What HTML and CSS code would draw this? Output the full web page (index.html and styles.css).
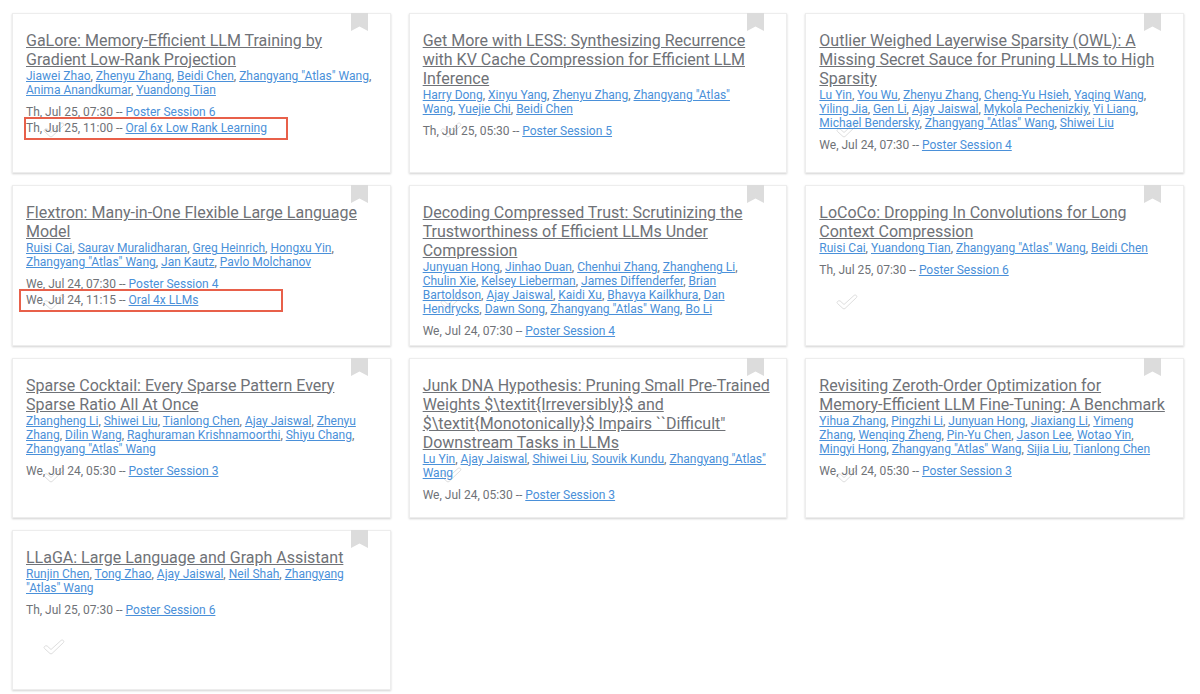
FILE: index.html
```html
<!DOCTYPE html>
<html lang="en">
<head>
<meta charset="utf-8">
<title>Papers</title>
<link rel="stylesheet" href="styles.css">
</head>
<body>
<svg class="defs" aria-hidden="true">
  <symbol id="bookmark" viewBox="0 0 17 18"><path d="M0 0H17V18L8.500 13.500L0 18Z" fill="#dcdcdc"/></symbol>
  <symbol id="check" viewBox="0 0 22 16"><path d="M1.500 7.500Q.5 8.500 1.500 9.500L7 14.500Q8 15.300 9 14.500L20.500 3.500Q21.300 2.500 20.300 1.500Q19.200.5 18.200 1.300L8 10.500L4.200 7Q2.800 6.200 1.500 7.500Z" fill="#fff" stroke="#dedede" stroke-linejoin="round"/></symbol>
</svg>
<main class="grid">
  <article class="card">
    <svg class="check" aria-hidden="true"><use href="#check"/></svg>
    <button class="bookmark" type="button" aria-label="Bookmark"><svg aria-hidden="true"><use href="#bookmark"/></svg></button>
    <h2 class="title"><a href="#">GaLore: Memory-Efficient LLM Training by Gradient Low-Rank Projection</a></h2>
    <p class="authors"><a href="#">Jiawei Zhao</a>, <a href="#">Zhenyu Zhang</a>, <a href="#">Beidi Chen</a>, <a href="#">Zhangyang "Atlas" Wang</a>, <a href="#">Anima Anandkumar</a>, <a href="#">Yuandong Tian</a></p>
    <ul class="sessions">
      <li>Th, Jul 25, 07:30 -- <a href="#">Poster Session 6</a></li>
      <li>Th, Jul 25, 11:00 -- <a href="#">Oral 6x Low Rank Learning</a></li>
    </ul>
    <span class="mark mark-galore"></span>
  </article>
  <article class="card">
    <svg class="check" aria-hidden="true"><use href="#check"/></svg>
    <button class="bookmark" type="button" aria-label="Bookmark"><svg aria-hidden="true"><use href="#bookmark"/></svg></button>
    <h2 class="title"><a href="#">Get More with LESS: Synthesizing Recurrence with KV Cache Compression for Efficient LLM Inference</a></h2>
    <p class="authors"><a href="#">Harry Dong</a>, <a href="#">Xinyu Yang</a>, <a href="#">Zhenyu Zhang</a>, <a href="#">Zhangyang "Atlas"<br>Wang</a>, <a href="#">Yuejie Chi</a>, <a href="#">Beidi Chen</a></p>
    <ul class="sessions">
      <li>Th, Jul 25, 05:30 -- <a href="#">Poster Session 5</a></li>
    </ul>
  </article>
  <article class="card">
    <svg class="check" aria-hidden="true"><use href="#check"/></svg>
    <button class="bookmark" type="button" aria-label="Bookmark"><svg aria-hidden="true"><use href="#bookmark"/></svg></button>
    <h2 class="title"><a href="#">Outlier Weighed Layerwise Sparsity (OWL): A Missing Secret Sauce for Pruning LLMs to High Sparsity</a></h2>
    <p class="authors"><a href="#">Lu Yin</a>, <a href="#">You Wu</a>, <a href="#">Zhenyu Zhang</a>, <a href="#">Cheng-Yu Hsieh</a>, <a href="#">Yaqing Wang</a>, <a href="#">Yiling Jia</a>, <a href="#">Gen Li</a>, <a href="#">Ajay Jaiswal</a>, <a href="#">Mykola Pechenizkiy</a>, <a href="#">Yi Liang</a>, <a href="#">Michael Bendersky</a>, <a href="#">Zhangyang "Atlas" Wang</a>, <a href="#">Shiwei Liu</a></p>
    <ul class="sessions">
      <li>We, Jul 24, 07:30 -- <a href="#">Poster Session 4</a></li>
    </ul>
  </article>
  <article class="card">
    <svg class="check" aria-hidden="true"><use href="#check"/></svg>
    <button class="bookmark" type="button" aria-label="Bookmark"><svg aria-hidden="true"><use href="#bookmark"/></svg></button>
    <h2 class="title"><a href="#">Flextron: Many-in-One Flexible Large Language Model</a></h2>
    <p class="authors"><a href="#">Ruisi Cai</a>, <a href="#">Saurav Muralidharan</a>, <a href="#">Greg Heinrich</a>, <a href="#">Hongxu Yin</a>, <a href="#">Zhangyang "Atlas" Wang</a>, <a href="#">Jan Kautz</a>, <a href="#">Pavlo Molchanov</a></p>
    <ul class="sessions">
      <li>We, Jul 24, 07:30 -- <a href="#">Poster Session 4</a></li>
      <li>We, Jul 24, 11:15 -- <a href="#">Oral 4x LLMs</a></li>
    </ul>
    <span class="mark mark-flextron"></span>
  </article>
  <article class="card">
    <svg class="check" aria-hidden="true"><use href="#check"/></svg>
    <button class="bookmark" type="button" aria-label="Bookmark"><svg aria-hidden="true"><use href="#bookmark"/></svg></button>
    <h2 class="title"><a href="#">Decoding Compressed Trust: Scrutinizing the Trustworthiness of Efficient LLMs Under Compression</a></h2>
    <p class="authors"><a href="#">Junyuan Hong</a>, <a href="#">Jinhao Duan</a>, <a href="#">Chenhui Zhang</a>, <a href="#">Zhangheng Li</a>, <a href="#">Chulin Xie</a>, <a href="#">Kelsey Lieberman</a>, <a href="#">James Diffenderfer</a>, <a href="#">Brian Bartoldson</a>, <a href="#">Ajay Jaiswal</a>, <a href="#">Kaidi Xu</a>, <a href="#">Bhavya Kailkhura</a>, <a href="#">Dan Hendrycks</a>, <a href="#">Dawn Song</a>, <a href="#">Zhangyang "Atlas" Wang</a>, <a href="#">Bo Li</a></p>
    <ul class="sessions">
      <li>We, Jul 24, 07:30 -- <a href="#">Poster Session 4</a></li>
    </ul>
  </article>
  <article class="card">
    <svg class="check" aria-hidden="true"><use href="#check"/></svg>
    <button class="bookmark" type="button" aria-label="Bookmark"><svg aria-hidden="true"><use href="#bookmark"/></svg></button>
    <h2 class="title"><a href="#">LoCoCo: Dropping In Convolutions for Long Context Compression</a></h2>
    <p class="authors"><a href="#">Ruisi Cai</a>, <a href="#">Yuandong Tian</a>, <a href="#">Zhangyang "Atlas" Wang</a>, <a href="#">Beidi Chen</a></p>
    <ul class="sessions">
      <li>Th, Jul 25, 07:30 -- <a href="#">Poster Session 6</a></li>
    </ul>
  </article>
  <article class="card">
    <svg class="check" aria-hidden="true"><use href="#check"/></svg>
    <button class="bookmark" type="button" aria-label="Bookmark"><svg aria-hidden="true"><use href="#bookmark"/></svg></button>
    <h2 class="title"><a href="#">Sparse Cocktail: Every Sparse Pattern Every Sparse Ratio All At Once</a></h2>
    <p class="authors"><a href="#">Zhangheng Li</a>, <a href="#">Shiwei Liu</a>, <a href="#">Tianlong Chen</a>, <a href="#">Ajay Jaiswal</a>, <a href="#">Zhenyu Zhang</a>, <a href="#">Dilin Wang</a>, <a href="#">Raghuraman Krishnamoorthi</a>, <a href="#">Shiyu Chang</a>, <a href="#">Zhangyang "Atlas" Wang</a></p>
    <ul class="sessions">
      <li>We, Jul 24, 05:30 -- <a href="#">Poster Session 3</a></li>
    </ul>
  </article>
  <article class="card">
    <svg class="check" aria-hidden="true"><use href="#check"/></svg>
    <button class="bookmark" type="button" aria-label="Bookmark"><svg aria-hidden="true"><use href="#bookmark"/></svg></button>
    <h2 class="title"><a href="#">Junk DNA Hypothesis: Pruning Small Pre-Trained Weights $\textit{Irreversibly}$ and $\textit{Monotonically}$ Impairs ``Difficult" Downstream Tasks in LLMs</a></h2>
    <p class="authors"><a href="#">Lu Yin</a>, <a href="#">Ajay Jaiswal</a>, <a href="#">Shiwei Liu</a>, <a href="#">Souvik Kundu</a>, <a href="#">Zhangyang "Atlas" Wang</a></p>
    <ul class="sessions">
      <li>We, Jul 24, 05:30 -- <a href="#">Poster Session 3</a></li>
    </ul>
  </article>
  <article class="card">
    <svg class="check" aria-hidden="true"><use href="#check"/></svg>
    <button class="bookmark" type="button" aria-label="Bookmark"><svg aria-hidden="true"><use href="#bookmark"/></svg></button>
    <h2 class="title"><a href="#">Revisiting Zeroth-Order Optimization for <span class="nowrap">Memory-Efficient</span> LLM Fine-Tuning: A Benchmark</a></h2>
    <p class="authors"><a href="#">Yihua Zhang</a>, <a href="#">Pingzhi Li</a>, <a href="#">Junyuan Hong</a>, <a href="#">Jiaxiang Li</a>, <a href="#">Yimeng Zhang</a>, <a href="#">Wenqing Zheng</a>, <a href="#">Pin-Yu Chen</a>, <a href="#">Jason Lee</a>, <a href="#">Wotao Yin</a>, <a href="#">Mingyi Hong</a>, <a href="#">Zhangyang "Atlas" Wang</a>, <a href="#">Sijia Liu</a>, <a href="#">Tianlong Chen</a></p>
    <ul class="sessions">
      <li>We, Jul 24, 05:30 -- <a href="#">Poster Session 3</a></li>
    </ul>
  </article>
  <article class="card">
    <svg class="check" aria-hidden="true"><use href="#check"/></svg>
    <button class="bookmark" type="button" aria-label="Bookmark"><svg aria-hidden="true"><use href="#bookmark"/></svg></button>
    <h2 class="title"><a href="#">LLaGA: Large Language and Graph Assistant</a></h2>
    <p class="authors"><a href="#">Runjin Chen</a>, <a href="#">Tong Zhao</a>, <a href="#">Ajay Jaiswal</a>, <a href="#">Neil Shah</a>, <a href="#">Zhangyang "Atlas" Wang</a></p>
    <ul class="sessions">
      <li>Th, Jul 25, 07:30 -- <a href="#">Poster Session 6</a></li>
    </ul>
  </article>
</main>
</body>
</html>
```
FILE: styles.css
```css
* { box-sizing: border-box; }

body {
  margin: 0;
  background: #fff;
  color: #6f7277;
  font-family: Roboto, sans-serif;
}

.defs { position: absolute; width: 0; height: 0; }

.grid {
  display: grid;
  grid-template-columns: repeat(3, minmax(0, 1fr));
  grid-auto-rows: 1fr;
  gap: 12px 18px;
  min-height: 100vh;
  padding: 13px 16px 4px 12px;
}

.card {
  position: relative;
  padding: 17px 13px 4px;
  background: #fff;
  border: 1px solid #ededed;
  box-shadow: 0 1px 2px rgba(0, 0, 0, 0.18);
}

.bookmark {
  position: absolute;
  top: -1px;
  right: 22px;
  padding: 0;
  border: 0;
  background: none;
}
.bookmark svg { display: block; width: 17px; height: 18px; }

/* The tick lies under the text of the card. */
.check { position: absolute; left: 30px; top: 108px; width: 22px; height: 16px; }
.title, .authors, .sessions { position: relative; margin: 0; }

.title { font-size: 16px; line-height: 19px; font-weight: 400; }
.title a { color: inherit; }
.nowrap { white-space: nowrap; }

.authors { font-size: 12px; line-height: 14px; }
.authors a, .sessions a { color: #4a90d9; }

.sessions {
  margin-top: 7px;
  padding: 0;
  list-style: none;
  font-size: 12px;
  line-height: 16px;
}

/* Red frames drawn over a highlighted session. */
.mark {
  position: absolute;
  width: 264px;
  height: 23px;
  border: 2px solid #e8604a;
  pointer-events: none;
}
.mark-galore { left: 11px; top: 103px; }
.mark-flextron { left: 6px; top: 103px; }
```
